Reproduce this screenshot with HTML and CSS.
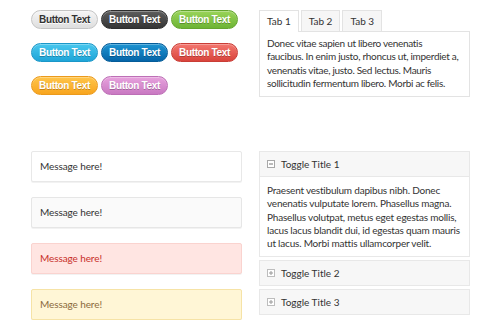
FILE: index.html
```html
<!DOCTYPE html>
<html lang="en">
<head>
    <meta charset="UTF-8">
    <title>UI Elements</title>
    <link rel="stylesheet" href="styles.css">
</head>
<body>
    <div class="page">
        <div class="buttons">
            <a href="javascript:" class="btn btn-light">Button Text</a>
            <a href="javascript:" class="btn btn-dark">Button Text</a>
            <a href="javascript:" class="btn btn-green">Button Text</a>
            <a href="javascript:" class="btn btn-cyan">Button Text</a>
            <a href="javascript:" class="btn btn-blue">Button Text</a>
            <a href="javascript:" class="btn btn-red">Button Text</a>
            <a href="javascript:" class="btn btn-orange">Button Text</a>
            <a href="javascript:" class="btn btn-pink">Button Text</a>
        </div>

        <div class="tabs">
            <ul class="tab-nav">
                <li class="tab-on"><a href="javascript:">Tab 1</a></li>
                <li><a href="javascript:">Tab 2</a></li>
                <li><a href="javascript:">Tab 3</a></li>
            </ul>
            <div class="tab-box">
                <p>Donec vitae sapien ut libero venenatis<br>faucibus. In enim justo, rhoncus ut, imperdiet a, venenatis vitae, justo. Sed lectus. Mauris sollicitudin fermentum libero. Morbi ac felis.</p>
            </div>
        </div>

        <div class="messages">
            <div class="msg">Message here!</div>
            <div class="msg msg-grey">Message here!</div>
            <div class="msg msg-error">Message here!</div>
            <div class="msg msg-warn">Message here!</div>
        </div>

        <div class="toggles">
            <div class="toggle toggle-open">
                <div class="toggle-title">
                    <svg class="toggle-icon" width="8" height="8" viewBox="0 0 8 8"><rect x="0.5" y="0.5" width="7" height="7" fill="#fff" stroke="#a8a8a8"/><path d="M2 4h4" stroke="#777"/></svg>
                    Toggle Title 1
                </div>
                <div class="toggle-box">
                    <p>Praesent vestibulum dapibus nibh. Donec venenatis vulputate lorem. Phasellus magna. Phasellus volutpat, metus eget egestas mollis, lacus lacus blandit dui, id egestas quam mauris ut lacus. Morbi mattis ullamcorper velit.</p>
                </div>
            </div>
            <div class="toggle">
                <div class="toggle-title">
                    <svg class="toggle-icon" width="8" height="8" viewBox="0 0 8 8"><rect x="0.5" y="0.5" width="7" height="7" fill="#fff" stroke="#bdbdbd"/><path d="M2 4h4M4 2v4" stroke="#999"/></svg>
                    Toggle Title 2
                </div>
            </div>
            <div class="toggle">
                <div class="toggle-title">
                    <svg class="toggle-icon" width="8" height="8" viewBox="0 0 8 8"><rect x="0.5" y="0.5" width="7" height="7" fill="#fff" stroke="#bdbdbd"/><path d="M2 4h4M4 2v4" stroke="#999"/></svg>
                    Toggle Title 3
                </div>
            </div>
        </div>
    </div>
</body>
</html>
```

FILE: styles.css
```css
body,p,ul { margin: 0; padding: 0;}
body { font-family: Lato, "Open Sans", Arial, sans-serif; font-size: 10px; color: #333; background: #fff;}
li { list-style: none;}
a { text-decoration: none;}

.page {
    display: grid;
    grid-template-columns: 211px 211px;
    grid-template-rows: 141px auto;
    column-gap: 17px;
    padding: 10px 0 0 31px;
}

/* buttons */
.buttons {
    display: grid;
    grid-template-columns: repeat(3, 67px);
    grid-auto-rows: 19px;
    column-gap: 3px;
    row-gap: 14px;
    align-content: start;
}
.btn {
    display: block;
    height: 19px;
    line-height: 17px;
    box-sizing: border-box;
    border: 1px solid;
    border-radius: 10px;
    text-align: center;
    font-family: "Liberation Sans", Arial, sans-serif;
    font-weight: bold;
    font-size: 10px;
    letter-spacing: -0.35px;
    color: #fff;
    text-shadow: 0 1px 0 rgba(0,0,0,.25);
    box-shadow: inset 0 1px 0 rgba(255,255,255,.3);
}
.btn-light { color: #333; text-shadow: 0 1px 0 #fff; background: linear-gradient(#f5f5f5, #dedede); border-color: #c4c4c4;}
.btn-dark { background: linear-gradient(#5e5e5e, #353535); border-color: #2e2e2e;}
.btn-green { background: linear-gradient(#9ad45a, #6db434); border-color: #64a52e;}
.btn-cyan { background: linear-gradient(#48c7ee, #1fa5d8); border-color: #1b97c8;}
.btn-blue { background: linear-gradient(#1d94d2, #0565a8); border-color: #055c99;}
.btn-red { background: linear-gradient(#f3776f, #d9443c); border-color: #c93d36;}
.btn-orange { background: linear-gradient(#ffc54a, #f8a51f); border-color: #eb9a1c;}
.btn-pink { background: linear-gradient(#e7a2dd, #c979c2); border-color: #bd6fb6;}

/* tabs */
.tab-nav {
    display: flex;
    gap: 2px;
    height: 21px;
}
.tab-nav li {
    height: 21px;
    box-sizing: border-box;
    border: 1px solid #e3e3e3;
    border-bottom: none;
    background: #f6f6f6;
}
.tab-nav li a {
    display: block;
    padding: 0 7px;
    line-height: 20px;
    color: #333;
}
.tab-nav .tab-on {
    background: #fff;
    height: 22px;
    position: relative;
    z-index: 1;
}
.tab-box {
    border: 1px solid #e3e3e3;
    padding: 5px 4px 6px 7px;
    line-height: 13.3px;
    letter-spacing: -0.3px;
}

/* messages */
.messages {
    display: flex;
    flex-direction: column;
    gap: 15px;
}
.msg {
    height: 31px;
    box-sizing: border-box;
    border: 1px solid #e8e8e8;
    border-radius: 2px;
    padding: 0 8px;
    line-height: 29px;
    letter-spacing: -0.1px;
    background: #fff;
    box-shadow: 0 1px 0 #f2f2f2;
}
.msg-grey { background: #fafafa; border-color: #e6e6e6;}
.msg-error { background: #ffe5e2; border-color: #fad3cf; color: #c8302a;}
.msg-warn { background: #fff6d6; border-color: #f6e3a6; color: #8b6a3c;}

/* toggles */
.toggles {
    display: flex;
    flex-direction: column;
    gap: 3px;
}
.toggle-title {
    display: flex;
    align-items: center;
    gap: 6px;
    height: 26px;
    box-sizing: border-box;
    padding: 0 7px;
    border: 1px solid #e8e8e8;
    background: #f7f7f7;
    color: #333;
}
.toggle-icon { flex: none;}
.toggle-box {
    border: 1px solid #e8e8e8;
    border-top: none;
    padding: 7px 5px 6px 7px;
    line-height: 13.3px;
    letter-spacing: -0.2px;
}
```
